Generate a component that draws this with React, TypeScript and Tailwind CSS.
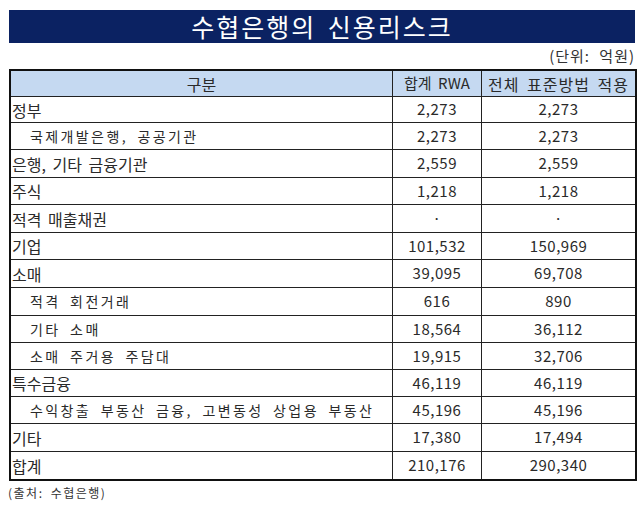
import React from 'react';

type Row = { label: string; rwa: string; std: string; sub?: boolean; h: string };

const rows: Row[] = [
  { label: '정부', rwa: '2,273', std: '2,273', h: 'h-[26px]' },
  { label: '국제개발은행, 공공기관', rwa: '2,273', std: '2,273', sub: true, h: 'h-[27px]' },
  { label: '은행, 기타 금융기관', rwa: '2,559', std: '2,559', h: 'h-[28px]' },
  { label: '주식', rwa: '1,218', std: '1,218', h: 'h-[27px]' },
  { label: '적격 매출채권', rwa: '·', std: '·', h: 'h-[28px]' },
  { label: '기업', rwa: '101,532', std: '150,969', h: 'h-[27px]' },
  { label: '소매', rwa: '39,095', std: '69,708', h: 'h-[28px]' },
  { label: '적격 회전거래', rwa: '616', std: '890', sub: true, h: 'h-[28px]' },
  { label: '기타 소매', rwa: '18,564', std: '36,112', sub: true, h: 'h-[27px]' },
  { label: '소매 주거용 주담대', rwa: '19,915', std: '32,706', sub: true, h: 'h-[27px]' },
  { label: '특수금융', rwa: '46,119', std: '46,119', h: 'h-[27px]' },
  { label: '수익창출 부동산 금융, 고변동성 상업용 부동산', rwa: '45,196', std: '45,196', sub: true, h: 'h-[27px]' },
  { label: '기타', rwa: '17,380', std: '17,494', h: 'h-[28px]' },
  { label: '합계', rwa: '210,176', std: '290,340', h: 'h-[27px]' },
];

export default function App() {
  return (
    <div className="w-[640px] h-[505px] bg-white pt-[10px] text-[#2a2a2a] font-['Noto_Sans_CJK_KR',sans-serif]">
      <div className="ml-[9px] w-[626px] h-[33px] bg-[#0b2262] flex items-center justify-center text-white text-[25px] tracking-[2px] [word-spacing:4px] leading-none">
        수협은행의 신용리스크
      </div>

      <div className="h-[26px] flex items-center justify-end pr-[5px] text-[15px] tracking-[1px] [word-spacing:5px] text-[#333]">
        (단위: 억원)
      </div>

      <div className="ml-[9px] w-[628px] border-2 border-[#111]">
        <div className="grid grid-cols-[382px_89px_153px] h-[26px] bg-[#c5d9f1] border-b border-[#222] text-[15px]">
          <div className="border-r border-[#222] flex items-center justify-center text-[16px]">구분</div>
          <div className="border-r border-[#222] flex items-center justify-center [word-spacing:3px]">합계 RWA</div>
          <div className="flex items-center justify-center tracking-[1px] [word-spacing:3px] text-[16px]">전체 표준방법 적용</div>
        </div>

        {rows.map((r, i) => (
          <div
            key={r.label}
            className={`grid grid-cols-[382px_89px_153px] ${r.h} ${i < rows.length - 1 ? 'border-b border-[#222]' : ''}`}
          >
            <div
              className={`border-r border-[#222] flex items-center ${
                r.sub ? 'pl-[19px] text-[14px] tracking-[2.4px] [word-spacing:4px]' : 'pl-[1px] text-[16px] [word-spacing:3px]'
              }`}
            >
              {r.label}
            </div>
            <div className="border-r border-[#222] flex items-center justify-center text-[15px] tracking-[0.5px]">
              {r.rwa}
            </div>
            <div className="flex items-center justify-center text-[15px] tracking-[0.5px]">{r.std}</div>
          </div>
        ))}
      </div>

      <div className="pl-[8px] pt-[3px] text-[12px] tracking-[1.5px] [word-spacing:3px] text-[#333]">(출처: 수협은행)</div>
    </div>
  );
}
